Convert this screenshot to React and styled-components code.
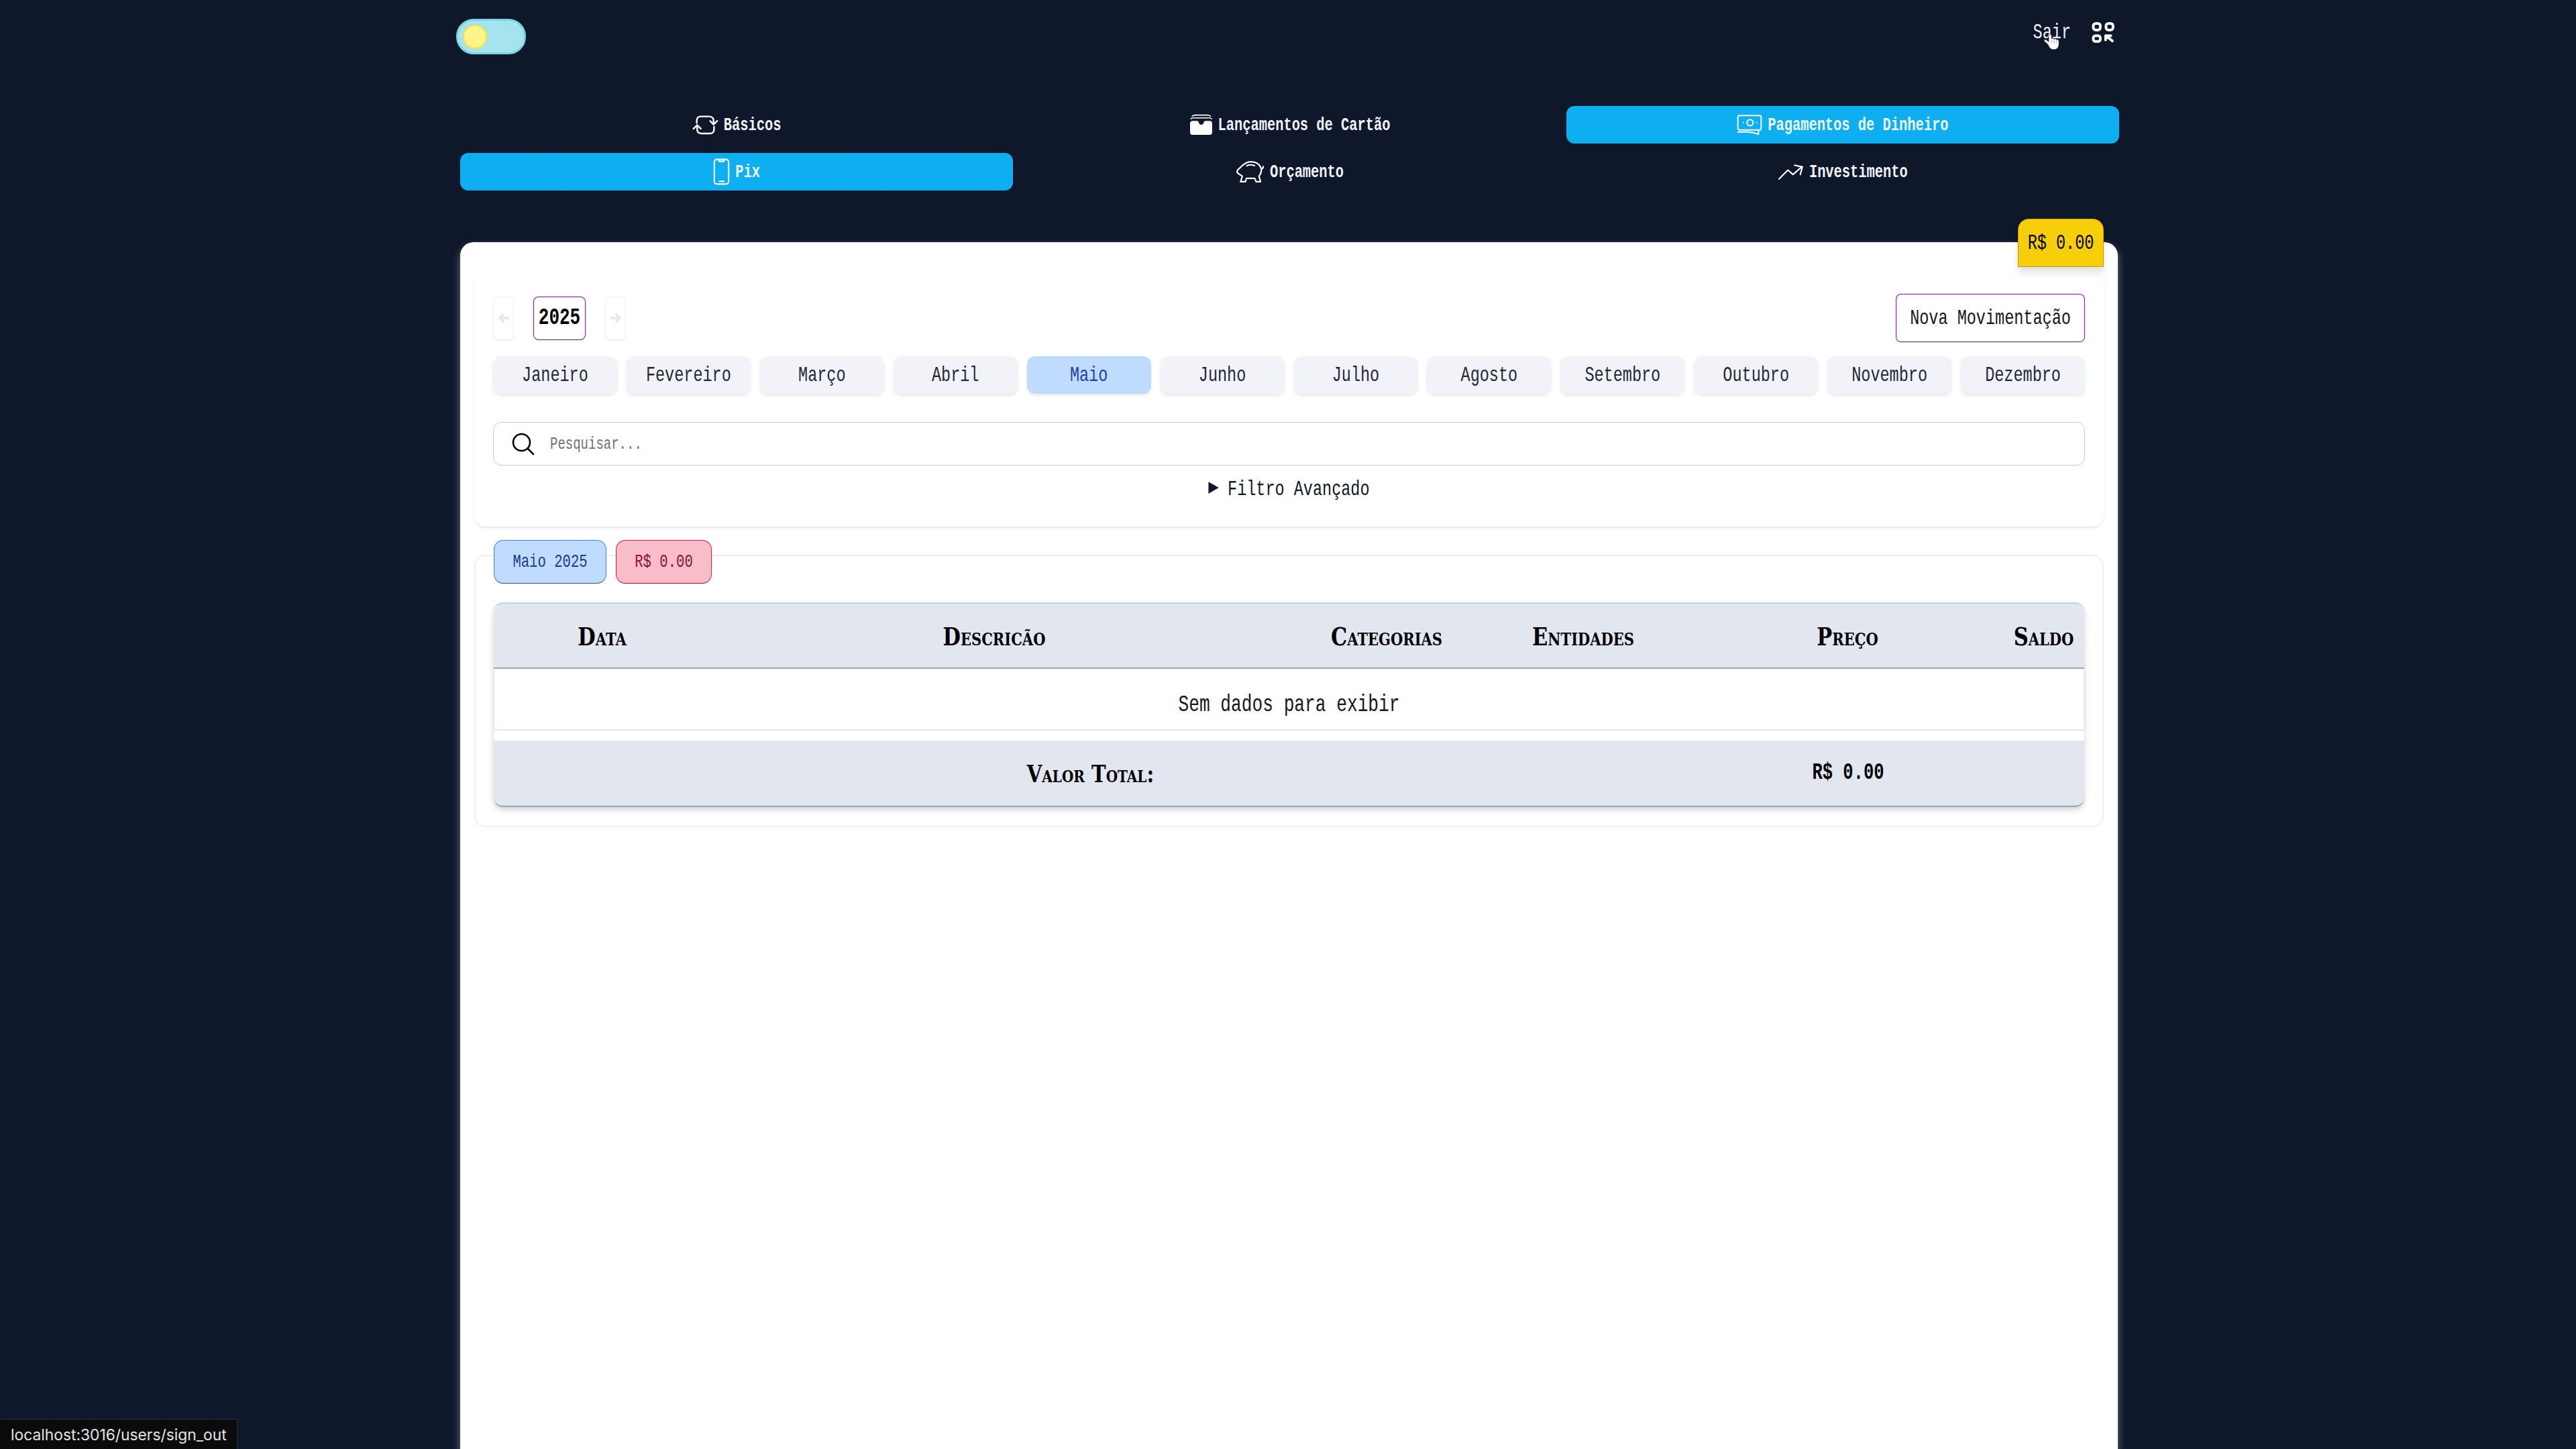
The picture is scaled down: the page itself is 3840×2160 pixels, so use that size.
import React from 'react';
import styled, { createGlobalStyle } from 'styled-components';

const months = ['Janeiro', 'Fevereiro', 'Março', 'Abril', 'Maio', 'Junho', 'Julho', 'Agosto', 'Setembro', 'Outubro', 'Novembro', 'Dezembro'];

const BasicosIcon = () => (
  <svg width="39" height="29" viewBox="33 33 120 90" fill="none" stroke="#fff" strokeWidth="7.5" strokeLinecap="round" strokeLinejoin="round">
    <path d="M53 68V58Q53 38 72 38H108Q131 38 131 58V74" />
    <path d="M115 59L131 75L148 58" />
    <path d="M133 86V98Q133 117 113 117H76Q55 117 55 98V79" />
    <path d="M38 95L55 78L72 95" />
  </svg>
);

const WalletIcon = () => (
  <svg width="35" height="32" viewBox="33 28 107 100" fill="none" stroke="#fff" strokeWidth="5" strokeLinecap="round">
    <path d="M45 38Q50 33 60 33H115Q125 33 130 38" />
    <path d="M39 50Q42 46 50 46H125Q132 46 135 50" />
    <path fill="#fff" stroke="none" d="M35 72Q35 60 47 60H68Q72 60 74 64Q78 78 87 78Q96 78 100 64Q102 60 106 60H126Q138 60 138 72V112Q138 125 126 125H47Q35 125 35 112Z" />
  </svg>
);

const MoneyIcon = () => (
  <svg width="38" height="32" viewBox="50 32 115 95" fill="none" stroke="#fff" strokeWidth="6" strokeLinecap="round" strokeLinejoin="round">
    <rect x="55" y="38" width="105" height="65" rx="8" />
    <circle cx="110" cy="70" r="14" />
    <path d="M80 70h.5M140 70h.5" />
    <path d="M55 112H100Q125 113 148 122V108" />
  </svg>
);

const PhoneIcon = () => (
  <svg width="25" height="40" viewBox="128 228 74 120" fill="none" stroke="#fff" strokeWidth="6.5" strokeLinecap="round">
    <rect x="133" y="233" width="64" height="110" rx="12" />
    <path d="M153 235v2q0 5 5 5h14q5 0 5-5v-2" />
    <path d="M156 331H176" />
  </svg>
);

const PiggyIcon = () => (
  <svg width="43" height="34" viewBox="240 234 130 102" fill="none" stroke="#fff" strokeWidth="6.5" strokeLinecap="round" strokeLinejoin="round">
    <path d="M262 265Q285 240 308 240Q345 240 355 270Q358 290 345 305L352 330H332L326 315H288L284 330H262L270 305Q258 298 248 290Q244 284 250 276Q256 270 262 265Z" />
    <path d="M358 272Q366 268 364 262" />
    <path d="M290 258Q308 250 325 258" />
  </svg>
);

const TrendIcon = () => (
  <svg width="39" height="25" viewBox="236 252 118 74" fill="none" stroke="#fff" strokeWidth="6.5" strokeLinecap="round" strokeLinejoin="round">
    <path d="M242 320L282 280L305 300L345 265" />
    <path d="M312 258L347 266L338 300" />
  </svg>
);

const AppsIcon = () => (
  <svg width="35" height="32" viewBox="292 40 106 98" fill="none" stroke="#fff" strokeWidth="12" strokeLinecap="round" strokeLinejoin="round">
    <rect x="302" y="49" width="32" height="30" rx="11" />
    <rect x="360" y="49" width="32" height="30" rx="11" />
    <rect x="302" y="105" width="32" height="26" rx="10" />
    <path d="M389 129L362 107M358 124V105H382" />
  </svg>
);

const HandCursor = () => (
  <svg width="24" height="26" viewBox="78 82 75 78">
    <path fill="#fff" stroke="#111" strokeWidth="1.5" d="M100 135L82 118Q80 110 90 112L103 122V92Q110 82 116 92V108Q122 102 128 110Q134 104 139 112Q146 108 150 118V135Q148 158 126 158Q108 158 100 135Z" />
    <path stroke="#555" strokeWidth="1.5" d="M116 112V128M128 112V128M139 114V128" />
  </svg>
);

const SearchIcon = () => (
  <svg width="34" height="34" viewBox="0 0 34 34" fill="none" stroke="#000" strokeWidth="2.6" strokeLinecap="round">
    <circle cx="14.5" cy="14.5" r="12.5" />
    <path d="M23.5 23.5L32 32" />
  </svg>
);

const ArrowLeft = () => (
  <svg width="18" height="16" viewBox="0 0 18 16" fill="none" stroke="#e5e7eb" strokeWidth="3.5">
    <path d="M17 8H3M9 2L3 8L9 14" />
  </svg>
);

const ArrowRight = () => (
  <svg width="18" height="16" viewBox="0 0 18 16" fill="none" stroke="#e5e7eb" strokeWidth="3.5">
    <path d="M1 8H15M9 2L15 8L9 14" />
  </svg>
);

const navItems = [
  { label: 'Básicos', icon: <BasicosIcon /> },
  { label: 'Lançamentos de Cartão', icon: <WalletIcon /> },
  { label: 'Pagamentos de Dinheiro', icon: <MoneyIcon />, active: true },
  { label: 'Pix', icon: <PhoneIcon />, active: true },
  { label: 'Orçamento', icon: <PiggyIcon /> },
  { label: 'Investimento', icon: <TrendIcon /> },
];

const columns = ['Data', 'Descricão', 'Categorias', 'Entidades', 'Preço', 'Saldo'];

const App = () => {
  return (
    <Page>
      <GlobalStyle />
      <Header>
        <Toggle>
          <ToggleKnob />
        </Toggle>
        <HeaderRight>
          <SignOut>
            <Tall>Sair</Tall>
            <CursorSpot>
              <HandCursor />
            </CursorSpot>
          </SignOut>
          <AppsIcon />
        </HeaderRight>
      </Header>

      <Nav>
        {navItems.map((item) => (
          <NavButton key={item.label} $active={item.active}>
            {item.icon}
            <Tall>{item.label}</Tall>
          </NavButton>
        ))}
      </Nav>

      <Main>
        <BalanceTag>
          <Tall>R$ 0.00</Tall>
        </BalanceTag>

        <FilterCard>
          <Controls>
            <YearPicker>
              <ArrowButton>
                <ArrowLeft />
              </ArrowButton>
              <YearBox>
                <Tall>2025</Tall>
              </YearBox>
              <ArrowButton>
                <ArrowRight />
              </ArrowButton>
            </YearPicker>
            <NewButton>
              <Tall>Nova Movimentação</Tall>
            </NewButton>
          </Controls>

          <Months>
            {months.map((month) => (
              <MonthButton key={month} $active={month === 'Maio'}>
                <Tall>{month}</Tall>
              </MonthButton>
            ))}
          </Months>

          <SearchBox>
            <SearchIcon />
            <SearchInput placeholder="Pesquisar..." />
          </SearchBox>

          <AdvancedFilter>
            <summary>
              <Tall>Filtro Avançado</Tall>
            </summary>
          </AdvancedFilter>
        </FilterCard>

        <TableCard>
          <Tags>
            <Tag $bg="#bfdbfe" $border="#3b82f6" $bottom="#3b4f8a" $color="#1e3a8a" $width="168px">
              <Tall>Maio 2025</Tall>
            </Tag>
            <Tag $bg="#f9bdc9" $border="#e11d48" $bottom="#9f1239" $color="#881337" $width="143px">
              <Tall>R$ 0.00</Tall>
            </Tag>
          </Tags>

          <Table>
            <TableHead>
              {columns.map((col) => (
                <HeadCell key={col}>{col}</HeadCell>
              ))}
            </TableHead>
            <EmptyRow>
              <Tall>Sem dados para exibir</Tall>
            </EmptyRow>
            <TableFoot>
              <FootLabel>Valor Total:</FootLabel>
              <FootValue>
                <Tall>R$ 0.00</Tall>
              </FootValue>
            </TableFoot>
          </Table>
        </TableCard>
      </Main>

      <StatusBar>localhost:3016/users/sign_out</StatusBar>
    </Page>
  );
};

export default App;

const GlobalStyle = createGlobalStyle`
  html, body {
    margin: 0;
    padding: 0;
    background-color: #0f172a;
    overflow: hidden;
  }
  * {
    box-sizing: border-box;
  }
`;

// the app's mono font is narrower than Liberation Mono, so stretch the glyphs
const Tall = styled.span`
  display: inline-block;
  transform: scaleY(1.35);
`;

const Page = styled.div`
  width: 2473px;
  height: 100vh;
  margin-left: 686px;
  display: flex;
  flex-direction: column;
  font-family: 'Liberation Mono', monospace;
`;

const Header = styled.header`
  height: 158px;
  padding: 28px 7px 0 0;
  display: flex;
  justify-content: space-between;
  align-items: flex-start;
  flex-shrink: 0;
`;

const Toggle = styled.div`
  width: 104px;
  height: 53px;
  margin-left: -6px;
  padding-left: 7px;
  border: 3px solid #7dd3e0;
  border-radius: 26px;
  background-color: #a5e3ee;
  display: flex;
  align-items: center;
`;

const ToggleKnob = styled.span`
  width: 36px;
  height: 36px;
  border-radius: 50%;
  background-color: #fef58a;
  border: 2px solid #fde047;
`;

const HeaderRight = styled.div`
  display: flex;
  align-items: center;
  gap: 30px;
  margin-top: 4px;
`;

const SignOut = styled.a`
  position: relative;
  font-size: 23.5px;
  color: #f1f5f9;
`;

const CursorSpot = styled.span`
  position: absolute;
  left: 15px;
  top: 14px;
`;

const Nav = styled.nav`
  display: grid;
  grid-template-columns: repeat(3, 1fr);
  row-gap: 14px;
  flex-shrink: 0;
`;

const NavButton = styled.a`
  height: 56px;
  border-radius: 12px;
  display: flex;
  align-items: center;
  justify-content: center;
  gap: 8px;
  font-size: 20.4px;
  font-weight: bold;
  color: #f1f5f9;
  background-color: ${(props) => (props.$active ? '#0eaff0' : 'transparent')};
`;

const Main = styled.main`
  position: relative;
  flex: 1;
  margin-top: 77px;
  margin-right: 2px;
  padding: 48px 21px 0;
  background-color: #fff;
  border-radius: 20px 20px 0 0;
  box-shadow: 0 6px 12px rgba(190, 200, 215, 0.55);
`;

const BalanceTag = styled.div`
  position: absolute;
  top: -35px;
  right: 21px;
  width: 128px;
  height: 72px;
  display: flex;
  align-items: center;
  justify-content: center;
  font-size: 23.5px;
  color: #000;
  background-color: #f6ce0a;
  border: 1px solid #ca9a04;
  border-radius: 16px 16px 0 0;
  box-shadow: 0 8px 12px rgba(0, 0, 0, 0.12);
`;

const FilterCard = styled.section`
  height: 376px;
  padding: 29px 28px 0;
  border-radius: 16px;
  background-color: #fff;
  box-shadow: 0 2px 3px rgba(0, 0, 0, 0.1), 0 0 2px rgba(0, 0, 0, 0.04);
`;

const Controls = styled.div`
  height: 72px;
  display: flex;
  align-items: center;
  justify-content: space-between;
`;

const YearPicker = styled.div`
  display: flex;
  gap: 29px;
`;

const ArrowButton = styled.button`
  width: 31px;
  height: 65px;
  padding: 0;
  display: flex;
  align-items: center;
  justify-content: center;
  background: #fff;
  border: 1.5px solid #f3eef5;
  border-radius: 8px;
  box-shadow: 0 1px 2px rgba(0, 0, 0, 0.05);
`;

const YearBox = styled.div`
  width: 78px;
  height: 65px;
  display: flex;
  align-items: center;
  justify-content: center;
  font-size: 26px;
  font-weight: bold;
  color: #000;
  border: 1.5px solid #a000ff;
  border-bottom-color: #333;
  border-radius: 8px;
`;

const NewButton = styled.button`
  width: 282px;
  height: 72px;
  padding: 0;
  font-family: inherit;
  font-size: 23.5px;
  color: #111827;
  background: #fff;
  border: 1.5px solid #a000ff;
  border-bottom-color: #444;
  border-radius: 8px;
  box-shadow: 0 1px 2px rgba(0, 0, 0, 0.1);
`;

const Months = styled.div`
  margin-top: 21px;
  display: grid;
  grid-template-columns: repeat(12, 1fr);
  gap: 14px;
`;

const MonthButton = styled.button`
  height: 56px;
  padding: 0;
  font-family: inherit;
  font-size: 23.5px;
  color: ${(props) => (props.$active ? '#1e40af' : '#1f2937')};
  background-color: ${(props) => (props.$active ? '#bfdbfe' : '#f1f3f8')};
  border: none;
  border-radius: 12px;
  box-shadow: 0 3px 5px rgba(0, 0, 0, 0.09);
`;

const SearchBox = styled.div`
  margin-top: 42px;
  height: 65px;
  padding-left: 27px;
  display: flex;
  align-items: center;
  gap: 21px;
  border: 1.5px solid #c8cace;
  border-radius: 12px;
`;

const SearchInput = styled.input`
  flex: 1;
  border: none;
  outline: none;
  font-family: inherit;
  font-size: 19px;
  transform: scaleY(1.35);
  &::placeholder {
    color: #6b7280;
    opacity: 1;
  }
`;

const AdvancedFilter = styled.details`
  margin-top: 16px;
  height: 38px;
  text-align: center;
  font-size: 23.5px;
  line-height: 38px;
  color: #111827;
  summary::marker {
    font-size: 27px;
  }
`;

const TableCard = styled.section`
  margin-top: 42px;
  height: 406px;
  padding: 0 27px;
  border: 2px solid #eef0f3;
  border-radius: 16px;
`;

const Tags = styled.div`
  margin-top: -24px;
  display: flex;
  gap: 14px;
`;

const Tag = styled.div`
  width: ${(props) => props.$width};
  height: 65px;
  display: flex;
  align-items: center;
  justify-content: center;
  font-size: 20.6px;
  color: ${(props) => props.$color};
  background-color: ${(props) => props.$bg};
  border: 1px solid ${(props) => props.$border};
  border-bottom-color: ${(props) => props.$bottom};
  border-radius: 14px;
`;

const Table = styled.div`
  margin-top: 28px;
  height: 305px;
  display: flex;
  flex-direction: column;
  border-radius: 14px;
  box-shadow: 0 4px 8px rgba(0, 0, 0, 0.18);
`;

const slabText = `
  font-family: 'DejaVu Serif', 'Liberation Serif', serif;
  font-variant: small-caps;
  font-weight: bold;
  color: #000;
  transform: scaleY(1.25);
`;

const TableHead = styled.div`
  height: 99px;
  display: grid;
  grid-template-columns: 323px 846px 324px 262px 526px minmax(0, 1fr);
  padding-right: 31px;
  align-items: center;
  text-align: center;
  background-color: #e2e6ef;
  border-top: 2px solid #c7d2e4;
  border-bottom: 2px solid #9ca3af;
  border-radius: 14px 14px 0 0;
`;

const HeadCell = styled.div`
  ${slabText}
  font-size: 30.5px;
  justify-self: center;
  white-space: nowrap;
`;

const EmptyRow = styled.div`
  height: 92px;
  flex-shrink: 0;
  padding-top: 18px;
  display: flex;
  align-items: center;
  justify-content: center;
  font-size: 26.2px;
  color: #111827;
  background-color: #fff;
  border-bottom: 2px solid #e5e7eb;
  border-left: 1px solid #e5e7eb;
  border-right: 1px solid #e5e7eb;
`;

const TableFoot = styled.div`
  margin-top: 15px;
  flex: 1;
  display: grid;
  grid-template-columns: 1779px 480px 1fr;
  align-items: center;
  text-align: center;
  background-color: #e2e6ef;
  border-bottom: 2px solid #8fa3bf;
  border-radius: 0 0 14px 14px;
`;

const FootLabel = styled.div`
  ${slabText}
  font-size: 29px;
`;

const FootValue = styled.div`
  font-size: 25.5px;
  font-weight: bold;
  color: #000;
  white-space: nowrap;
`;

const StatusBar = styled.div`
  position: fixed;
  left: 0;
  bottom: 0;
  width: 354px;
  height: 45px;
  padding-left: 16px;
  display: flex;
  align-items: center;
  font-family: Inter, Roboto, sans-serif;
  font-size: 22.8px;
  color: #e5e5e5;
  background-color: #0b0b0b;
  border-top: 1px solid #2a2f3a;
  border-right: 1px solid #2a2f3a;
`;
